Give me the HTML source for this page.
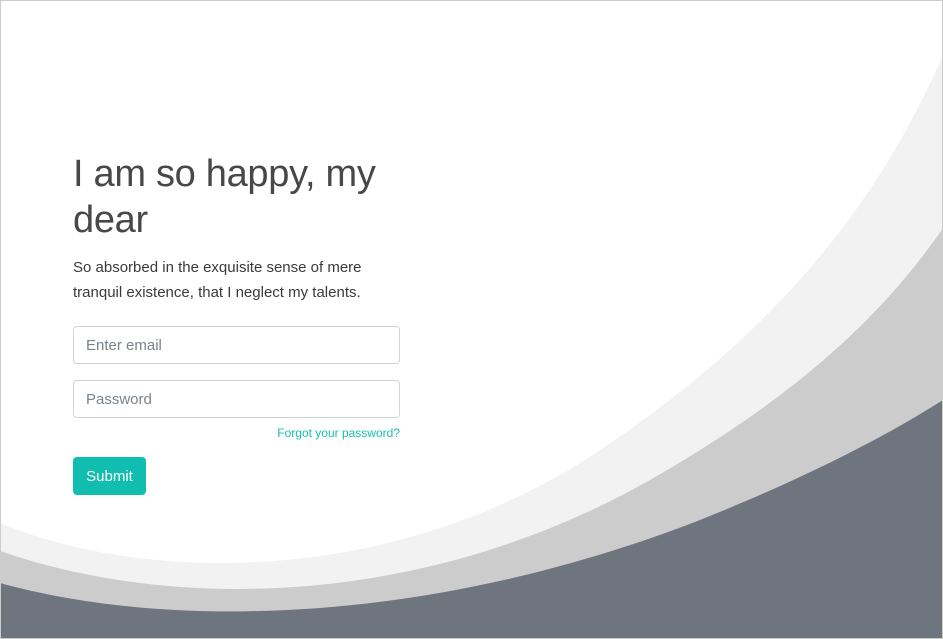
<!DOCTYPE html>
<html><head><style>
html,body{margin:0;padding:0}
body{width:943px;height:639px;position:relative;overflow:hidden;background:#fff;font-family:"Liberation Sans",sans-serif;color:#333}
.frame{position:absolute;inset:0;border:1px solid #ccc;box-sizing:border-box;z-index:5;pointer-events:none}
svg{position:absolute;left:0;top:0}
.c{position:absolute;left:73px;top:151px;width:327px}
h1{font-weight:300;font-size:38px;line-height:46px;margin:0;color:#484848;letter-spacing:-0.3px}
p{font-size:15px;line-height:25px;margin:12px 0 0;color:#3a3a3a}
.in{position:absolute;left:0;width:327px;height:38px;border:1px solid #ced4da;border-radius:4px;box-sizing:border-box;padding-left:12px;font-size:15px;line-height:38px;color:#7a828a}
.fg{position:absolute;right:0;top:275px;font-size:12px;color:#17bfb0}
.btn{position:absolute;left:0;top:306px;width:73px;height:38px;background:#11bdae;border-radius:4px;color:#fff;font-size:15px;line-height:40px;text-align:center}
</style></head><body>
<svg width="943" height="639" viewBox="0 0 943 639">
<path d="M0,523 C150,585 400,585 600,450 C780,330 880,200 943,55 L943,639 L0,639 Z" fill="#f2f2f2"/>
<path d="M0,551 C170,610 420,610 650,480 C790,400 880,320 943,228 L943,639 L0,639 Z" fill="#cccccc"/>
<path d="M0,583 C170,630 430,625 700,520 C800,480 880,440 943,400 L943,639 L0,639 Z" fill="#6e757f"/>
</svg>
<div class="c">
<h1>I am so happy, my dear</h1>
<p>So absorbed in the exquisite sense of mere tranquil existence, that I neglect my talents.</p>
<div class="in" style="top:175px">Enter email</div>
<div class="in" style="top:229px">Password</div>
<div class="fg">Forgot your password?</div>
<div class="btn">Submit</div>
</div>
<div class="frame"></div>
</body></html>
